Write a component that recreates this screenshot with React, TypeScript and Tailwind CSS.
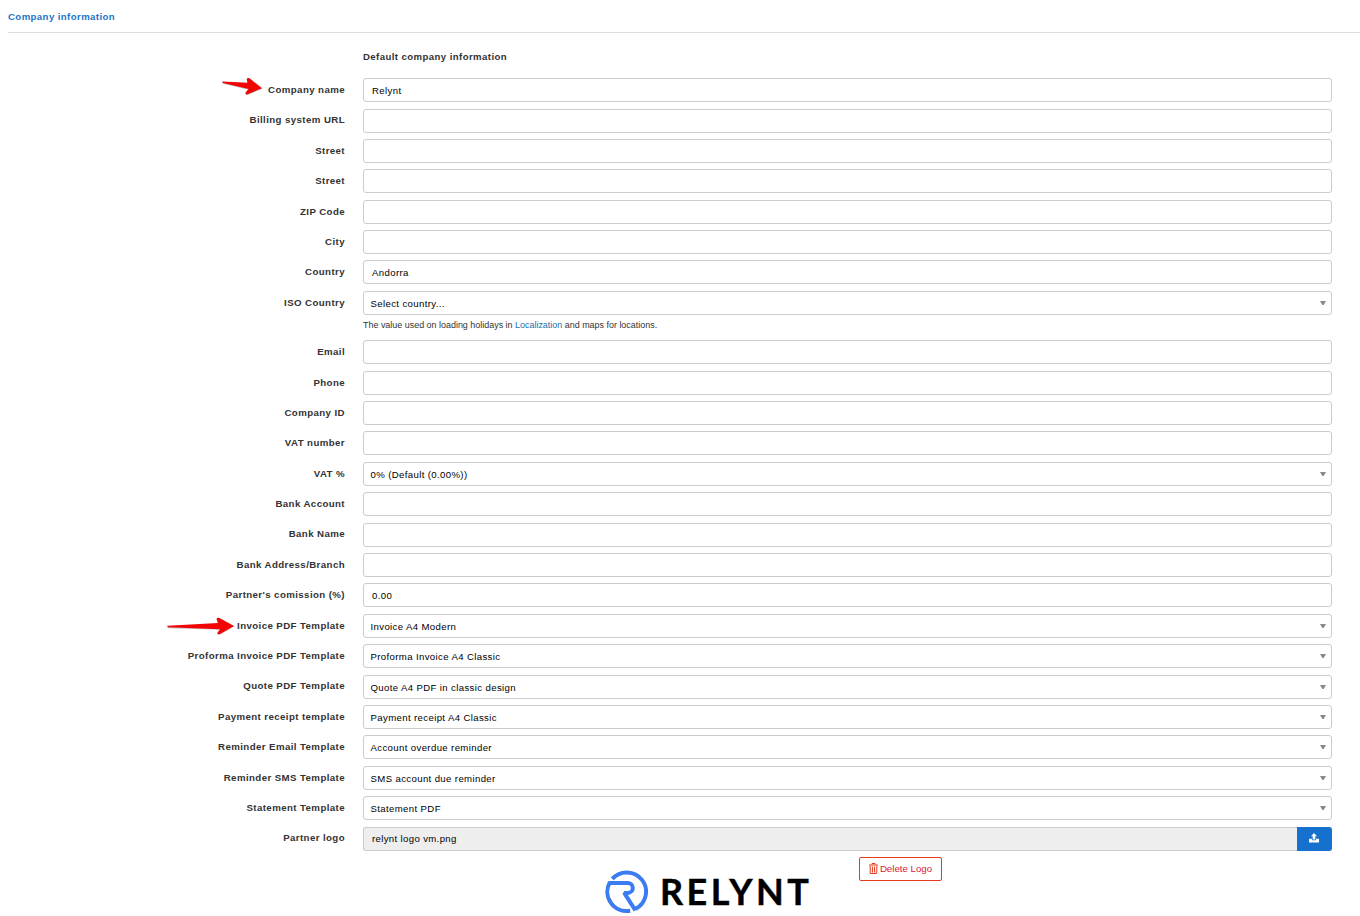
import type { ReactNode } from "react";

type Field = { label: string; value?: string; select?: boolean };

const generalFields: Field[] = [
  { label: "Company name", value: "Relynt" },
  { label: "Billing system URL" },
  { label: "Street" },
  { label: "Street" },
  { label: "ZIP Code" },
  { label: "City" },
  { label: "Country", value: "Andorra" },
  { label: "ISO Country", value: "Select country...", select: true },
];

const detailFields: Field[] = [
  { label: "Email" },
  { label: "Phone" },
  { label: "Company ID" },
  { label: "VAT number" },
  { label: "VAT %", value: "0% (Default (0.00%))", select: true },
  { label: "Bank Account" },
  { label: "Bank Name" },
  { label: "Bank Address/Branch" },
  { label: "Partner's comission (%)", value: "0.00" },
  { label: "Invoice PDF Template", value: "Invoice A4 Modern", select: true },
  { label: "Proforma Invoice PDF Template", value: "Proforma Invoice A4 Classic", select: true },
  { label: "Quote PDF Template", value: "Quote A4 PDF in classic design", select: true },
  { label: "Payment receipt template", value: "Payment receipt A4 Classic", select: true },
  { label: "Reminder Email Template", value: "Account overdue reminder", select: true },
  { label: "Reminder SMS Template", value: "SMS account due reminder", select: true },
  { label: "Statement Template", value: "Statement PDF", select: true },
];

function Arrow({ long }: { long?: boolean }) {
  return long ? (
    <svg className="absolute top-0 left-[166px] h-[22px] w-[70px]" viewBox="0 0 70 22" aria-hidden="true">
      <path d="M1.5 12.5 52 9.8 50.8 5.5Q51.5 4.2 53.5 4.6L68.5 12.6 54 20.6Q51.2 21.4 51.2 19.5L55 15.8 2 14.3Q.8 13.4 1.5 12.5Z" fill="#777" opacity=".45" />
      <path d="M1.5 11.7 52 9 50.5 5.1Q51 3.3 53 3.8L68 12 54 20Q51 20.6 51.4 18.8L54 15.3 2 13.2Q.8 12.5 1.5 11.7Z" fill="#f20505" />
    </svg>
  ) : (
    <svg className="absolute -top-[3px] left-[221px] h-[22px] w-[44px]" viewBox="0 0 44 22" aria-hidden="true">
      <path d="M1.5 7.5 26 8.6 25.8 4.2Q27 2.4 29 4L41.5 13.8 26 20.2Q23.8 20 24.8 17.8L27.5 14.8 2 8.8Z" fill="#777" opacity=".45" />
      <path d="M1.3 6.6 26.5 7.8 25.7 4Q26.5 2.4 28.5 3.3L41 13.2 26 19.4Q23.8 19.2 24.8 17.2L27.5 14 2 8Q1 7.4 1.3 6.6Z" fill="#f20505" />
    </svg>
  );
}

function Row({ label, children, arrow }: { label: string; children: ReactNode; arrow?: "short" | "long" }) {
  return (
    <div className="relative flex h-6 shrink-0">
      {arrow && <Arrow long={arrow === "long"} />}
      <div className="w-[345px] shrink-0 pt-[4.85px] text-right text-[9.7px] leading-[13px] font-bold tracking-[0.4px] text-[#333]">
        {label}
      </div>
      <div className="ml-[18px] w-[969px]">{children}</div>
    </div>
  );
}

function Control({ value, select }: Field) {
  return (
    <div
      className={
        select
          ? "flex h-6 items-center justify-between rounded-[3px] border border-[#ccc] bg-white pr-[5px] pl-[6.5px] text-[9.6px] tracking-[0.37px] text-black"
          : "flex h-6 items-center rounded-[3px] border border-[#ccc] bg-white px-2 text-[9.6px] tracking-[0.37px] text-black"
      }
    >
      <span className="pt-px leading-[13px]">{value}</span>
      {select && (
        <svg className="h-1 w-1.5" viewBox="0 0 6 4" aria-hidden="true">
          <path d="M0 0H6L3.6 4H2.4Z" fill="#888" />
        </svg>
      )}
    </div>
  );
}

function FieldRow(field: Field) {
  const arrow =
    field.label === "Company name" ? "short" : field.label === "Invoice PDF Template" ? "long" : undefined;
  return (
    <Row label={field.label} arrow={arrow}>
      <Control {...field} />
    </Row>
  );
}

function Logo() {
  return (
    <div className="flex h-[46px] items-start">
      <svg className="h-[44px] w-[44px] shrink-0" viewBox="0 0 44 44" aria-hidden="true">
        <g fill="none" stroke="#3b7cf3" strokeWidth="4">
          <path d="M7.3 8.9A19.3 19.3 0 1 1 30.5 38.9" />
          <path d="M3.4 12.9H22.8A5 5 0 0 1 22.8 22.9H19.2L30.4 40.4" strokeLinejoin="bevel" />
          <path d="M4.7 12.5A19.3 19.3 0 0 0 25.2 40.7" />
        </g>
      </svg>
      <span className="-mt-[1px] ml-[11px] font-['Lato',sans-serif] text-[36px] leading-[44px] font-bold tracking-[3.4px] text-black [-webkit-text-stroke:0.4px_black]">
        RELYNT
      </span>
    </div>
  );
}

export default function App() {
  return (
    <main className="h-[916px] w-[1360px] overflow-hidden bg-white font-['Liberation_Sans',Arial,sans-serif]">
      <header className="ml-2 h-[33px] border-b border-[#ddd] pt-[10px] text-[9.6px] leading-[13px] font-bold tracking-[0.42px] text-[#1b75c9]">
        Company information
      </header>
      <h2 className="mt-[17px] ml-[363px] h-[28.125px] text-[9.6px] leading-[13px] font-bold tracking-[0.42px] text-[#333]">
        Default company information
      </h2>
      <section className="flex flex-col gap-[6.4px]">
        {generalFields.map((field, i) => (
          <FieldRow key={i} {...field} />
        ))}
      </section>
      <p className="ml-[363px] h-[25.45px] pt-[4px] text-[8.95px] leading-[13px] text-[#333]">
        The value used on loading holidays in <a className="text-[#1b6eae]">Localization</a> and maps for locations.
      </p>
      <section className="flex flex-col gap-[6.4px]">
        {detailFields.map((field, i) => (
          <FieldRow key={i} {...field} />
        ))}
        <Row label="Partner logo">
          <div className="flex h-6">
            <div className="flex flex-1 items-center rounded-l-[3px] border border-r-0 border-[#ccc] bg-[#eee] px-2 text-[9.6px] leading-[13px] tracking-[0.35px] text-black">
              relynt logo vm.png
            </div>
            <button className="flex w-[35px] items-center justify-center rounded-r-[3px] bg-[#1570ce] pr-px pb-px" aria-label="Upload">
              <svg className="h-[10px] w-[10px]" viewBox="0 0 10 10" fill="#fff" aria-hidden="true">
                <path d="M5 0 8 3.3H6.3V6.6H3.7V3.3H2ZM0 5.8H3V7.2H7V5.8H10V9.6H0Z" />
              </svg>
            </button>
          </div>
        </Row>
      </section>
      <div className="flex items-start">
        <div className="mt-[19px] ml-[605px] w-[254px]">
          <Logo />
        </div>
        <button className="mt-[6px] flex h-[24px] w-[83px] items-center justify-center gap-[2px] rounded-[2px] border border-[#e8391d] text-[9.7px] text-[#d9203a]">
          <svg className="h-[11px] w-[9px]" viewBox="0 0 9 11" fill="none" stroke="#e8391d" aria-hidden="true">
            <path d="M0 2H9M3 1.5V.5H6V1.5M1.2 2.5V10.5H7.8V2.5M3.4 3.5V9.5M5.6 3.5V9.5" />
          </svg>
          <span className="pt-px">Delete Logo</span>
        </button>
      </div>
    </main>
  );
}
